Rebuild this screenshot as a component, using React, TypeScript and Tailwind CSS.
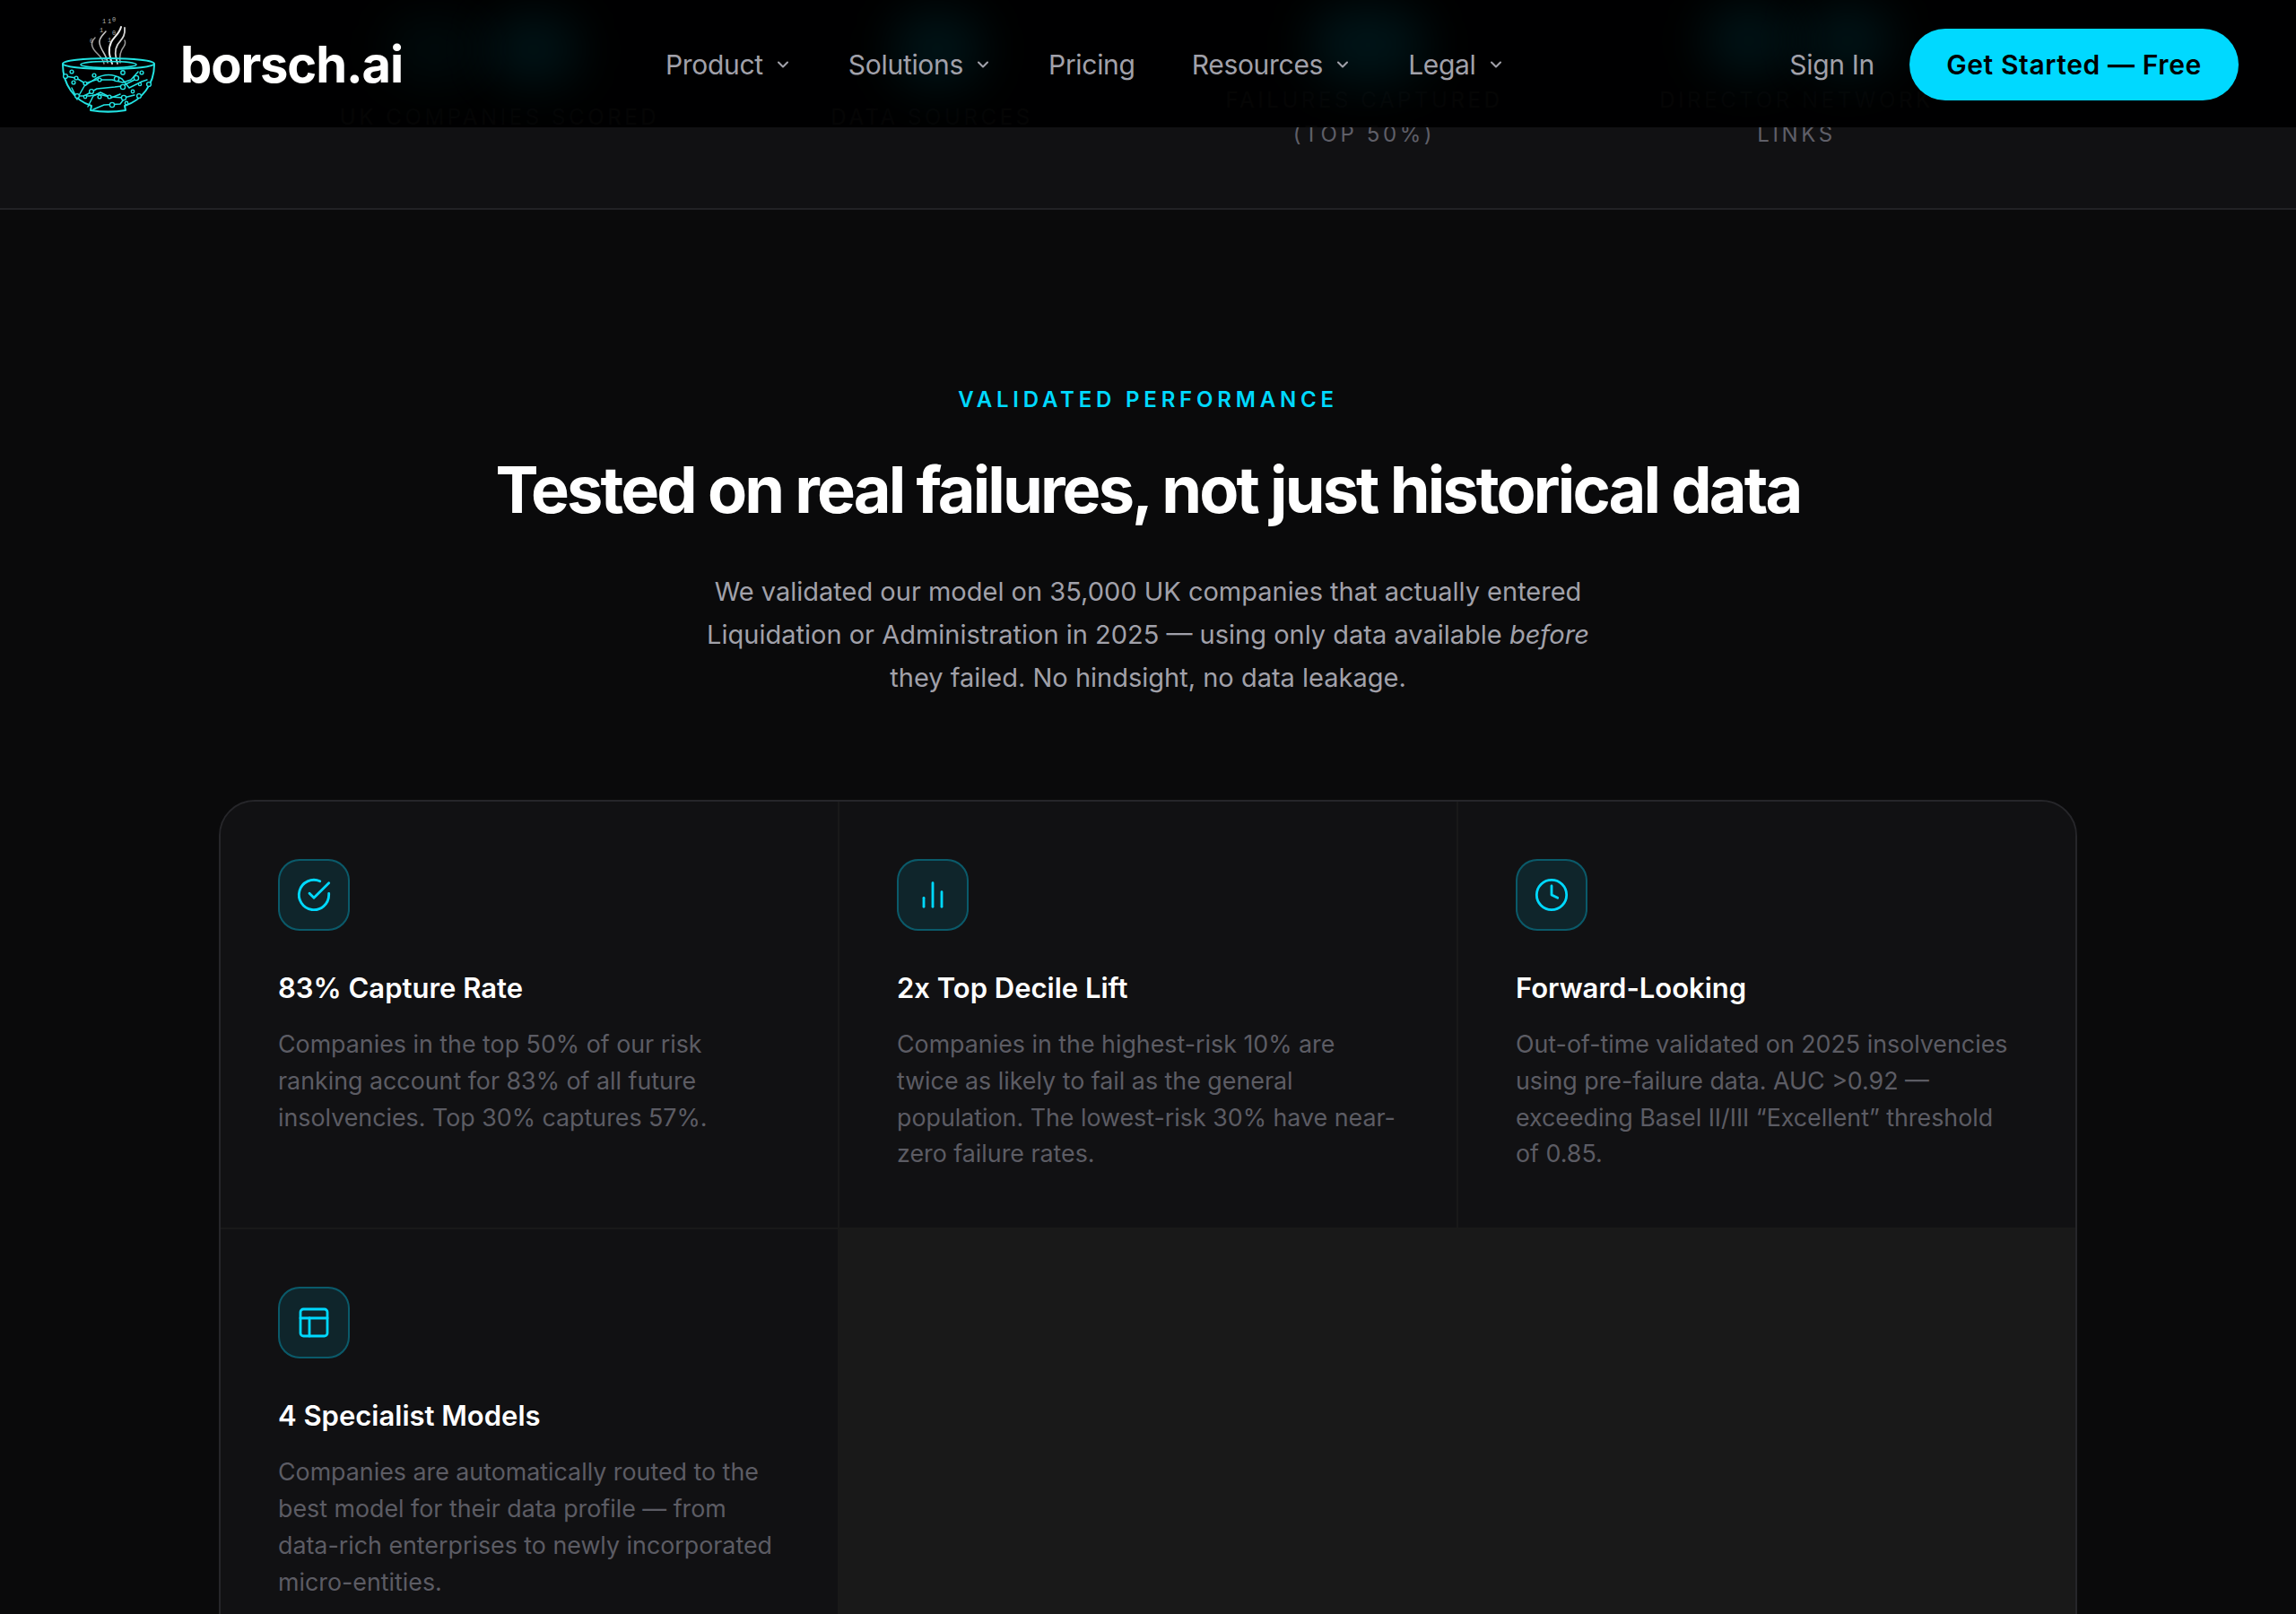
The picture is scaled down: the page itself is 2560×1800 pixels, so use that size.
import { ChevronDown } from "lucide-react";
import * as React from "react";

const navLinks = [
  { label: "Product", hasMenu: true },
  { label: "Solutions", hasMenu: true },
  { label: "Pricing", hasMenu: false },
  { label: "Resources", hasMenu: true },
  { label: "Legal", hasMenu: true },
];

const stats = [
  { label: ["UK COMPANIES SCORED"] },
  { label: ["DATA SOURCES"] },
  { label: ["FAILURES CAPTURED", "(TOP 50%)"] },
  { label: ["DIRECTOR NETWORK", "LINKS"] },
];

function BorschLogo() {
  return (
    <svg aria-hidden="true" className="h-[140px] w-[150px] shrink-0" fill="none" viewBox="50 0 150 140">
      <g stroke="#d4d4d4" strokeLinecap="round" strokeWidth="1.5">
        <path d="M116 69c-2-9-11-12-13-19-2-5 1-8 3-10" stroke="#9a9a9a" />
        <path d="M120 68c-1-9-8-14-9-22-1-6 4-9 7-13" stroke="#c4c4c4" />
        <path d="M125 69c-3-9-5-16-1-24 3-6 9-9 11-17" stroke="#ededed" strokeWidth="2" />
        <path d="M131 69c-2-8-4-14 0-21 4-6 9-9 8-19" stroke="#d4d4d4" strokeWidth="1.8" />
        <path d="M134 68c-1-7 0-13 4-18 2-3 2-5 1-7" stroke="#9a9a9a" />
      </g>
      <g fill="#b0b0b0" fontFamily="'Liberation Mono', monospace" fontSize="7">
        <text x="114" y="24">1</text>
        <text x="120" y="24">1</text>
        <text x="125" y="22">0</text>
        <text x="111" y="34">1</text>
        <text x="125" y="37">0</text>
        <text x="120" y="45">1</text>
        <text x="100" y="46">0</text>
        <text x="116" y="67">0</text>
      </g>
      <g stroke="#22e3e3" strokeLinecap="round" strokeLinejoin="round">
        <ellipse cx="121" cy="69" rx="51" ry="6" strokeWidth="2" />
        <ellipse cx="121" cy="70" rx="31" ry="3.5" strokeWidth="1.6" />
        <path d="M70 70c0 22 13 40 32 46l-1 5c12 2 27 2 39 0l-1-5c19-6 33-24 33-46" strokeWidth="2" />
        <g strokeWidth="1.5">
          <path d="M73 83l12 2 10 6 12-4 18 0 12 3 9-3 8-9" />
          <path d="M86 108l8-14 12-8c10-6 20-6 30 0l8 10 14-7 6-2" />
          <path d="M94 105l14-8 20-2 8-1 14-7" />
          <path d="M88 105h12l10-2 12 3 16 1 12-3" />
          <path d="M98 117l6-12 8-4 12 6 10-4" />
          <path d="M104 120l12-5 18-1 6-8" />
          <path d="M80 96l4 8 2 5" />
        </g>
        <g fill="#000" strokeWidth="1.4">
          <circle cx="73" cy="83" r="2.4" />
          <circle cx="80" cy="78" r="1.9" />
          <circle cx="85" cy="85" r="1.9" />
          <circle cx="82" cy="90" r="1.9" />
          <circle cx="95" cy="91" r="1.9" />
          <circle cx="105" cy="82" r="1.9" />
          <circle cx="111" cy="87" r="1.9" />
          <circle cx="130" cy="86" r="2.6" />
          <circle cx="137" cy="95" r="2.6" />
          <circle cx="137" cy="79" r="2.2" />
          <circle cx="152" cy="85" r="2.6" />
          <circle cx="158" cy="79" r="1.9" />
          <circle cx="166" cy="92" r="2.4" />
          <circle cx="156" cy="92" r="1.6" />
          <circle cx="86" cy="105" r="2.4" />
          <circle cx="102" cy="100" r="2.4" />
          <circle cx="111" cy="106" r="1.9" />
          <circle cx="122" cy="106" r="1.9" />
          <circle cx="138" cy="107" r="2.6" />
          <circle cx="155" cy="105" r="2.4" />
          <circle cx="148" cy="100" r="1.7" />
          <circle cx="125" cy="115" r="2.6" />
          <circle cx="141" cy="113" r="1.7" />
          <circle cx="95" cy="106" r="1.7" />
        </g>
      </g>
    </svg>
  );
}

function StrokeIcon({ children }: { children: React.ReactNode }) {
  return (
    <span className="flex size-20 items-center justify-center rounded-3xl border-2 border-[#00d9ff]/30 bg-[#00d9ff]/10">
      <svg
        aria-hidden="true"
        className="size-10 text-[#00d9ff]"
        fill="none"
        stroke="currentColor"
        strokeLinecap="round"
        strokeLinejoin="round"
        strokeWidth="1.7"
        viewBox="0 0 24 24"
      >
        {children}
      </svg>
    </span>
  );
}

const features = [
  {
    title: "83% Capture Rate",
    text: "Companies in the top 50% of our risk ranking account for 83% of all future insolvencies. Top 30% captures 57%.",
    icon: (
      <>
        <path d="M22 11.08V12a10 10 0 1 1-5.93-9.14" />
        <path d="M22 4 12 14.01l-3-3" />
      </>
    ),
  },
  {
    title: "2x Top Decile Lift",
    text: "Companies in the highest-risk 10% are twice as likely to fail as the general population. The lowest-risk 30% have near-zero failure rates.",
    icon: (
      <>
        <path d="M18 20V10" />
        <path d="M12 20V4" />
        <path d="M6 20v-6" />
      </>
    ),
  },
  {
    title: "Forward-Looking",
    text: "Out-of-time validated on 2025 insolvencies using pre-failure data. AUC >0.92 — exceeding Basel II/III “Excellent” threshold of 0.85.",
    icon: (
      <>
        <circle cx="12" cy="12" r="10" />
        <path d="M12 6v6l4 2" />
      </>
    ),
  },
  {
    title: "4 Specialist Models",
    text: "Companies are automatically routed to the best model for their data profile — from data-rich enterprises to newly incorporated micro-entities.",
    icon: (
      <>
        <rect height="18" rx="2" width="18" x="3" y="3" />
        <path d="M3 9h18" />
        <path d="M9 21V9" />
      </>
    ),
  },
];

function Navbar() {
  return (
    <header className="absolute inset-x-0 top-0 z-10 flex h-[142px] items-center overflow-hidden bg-black/95 pt-[2px] pr-[64px] pl-[50px]">
      {/* glow of the stat numbers, scrolled away under the nav */}
      <div className="absolute top-[20px] left-[430px] -z-10 h-[70px] w-[110px] rounded-full bg-[#00d9ff]/5 blur-[28px]" />
      <div className="absolute top-[20px] left-[545px] -z-10 h-[70px] w-[100px] rounded-full bg-[#00d9ff]/10 blur-[28px]" />
      <div className="absolute top-[15px] left-[995px] -z-10 h-[80px] w-[100px] rounded-full bg-[#00d9ff]/10 blur-[28px]" />
      <div className="absolute top-[10px] left-[1460px] -z-10 h-[80px] w-[130px] rounded-full bg-[#00d9ff]/10 blur-[28px]" />
      <div className="absolute top-[10px] left-[1900px] -z-10 h-[70px] w-[100px] rounded-full bg-[#00d9ff]/10 blur-[28px]" />
      <div className="absolute top-[10px] left-[2010px] -z-10 h-[70px] w-[100px] rounded-full bg-[#00d9ff]/10 blur-[28px]" />
      <a className="flex items-center gap-[1px]" href="#">
        <BorschLogo />
        <span className="text-[56px] leading-none font-bold tracking-[-0.02em] text-white">borsch.ai</span>
      </a>
      <nav className="ml-[293px] flex items-center gap-[63px]">
        {navLinks.map((link) => (
          <a className="flex items-center gap-3 text-[30px] tracking-[-0.01em] text-[#a1a1aa]" href="#" key={link.label}>
            {link.label}
            {link.hasMenu && <ChevronDown aria-hidden="true" className="size-5" strokeWidth={2.5} />}
          </a>
        ))}
      </nav>
      <div className="ml-auto flex items-center gap-[39px]">
        <a className="text-[30px] tracking-[-0.01em] text-[#a1a1aa]" href="#">
          Sign In
        </a>
        <a
          className="flex h-20 w-[367px] items-center justify-center rounded-full bg-[#00d9ff] text-[30px] font-semibold tracking-[0.02em] text-black"
          href="#"
        >
          Get Started — Free
        </a>
      </div>
    </header>
  );
}

function StatsBand() {
  return (
    <section className="h-[234px] overflow-hidden border-b-2 border-[#222225] bg-[#111113]">
      <div className="mx-auto grid h-[262px] w-[1928px] grid-cols-4">
        {stats.map((stat) => (
          <div className="flex flex-col items-center justify-center text-[24px] leading-[38px] tracking-[0.15em] text-[#5f5f68]" key={stat.label[0]}>
            {stat.label.map((line) => (
              <span key={line}>{line}</span>
            ))}
          </div>
        ))}
      </div>
    </section>
  );
}

function FeatureGrid() {
  return (
    <div className="mx-auto mt-[112px] grid w-[2072px] grid-cols-3 gap-[2px] overflow-hidden rounded-[40px] border-2 border-[#26262a] bg-[#191919]">
      {features.map((feature) => (
        <article className="bg-[#111113] px-16 pt-16 pb-[62px]" key={feature.title}>
          <StrokeIcon>{feature.icon}</StrokeIcon>
          <h3 className="mt-[42px] text-[31px] leading-[44px] font-semibold text-white">{feature.title}</h3>
          <p className="mt-[20px] text-[26.8px] leading-[40.8px] text-[#5c5c64]">{feature.text}</p>
        </article>
      ))}
    </div>
  );
}

export default function App() {
  return (
    <div className="relative h-[1800px] overflow-hidden bg-[#0a0a0b] font-['Inter',sans-serif]">
      <Navbar />
      <StatsBand />
      <main className="pt-[198px]">
        <p className="text-center text-[24px] leading-[28px] font-semibold tracking-[0.2em] text-[#00d9ff]">
          VALIDATED PERFORMANCE
        </p>
        <h2 className="mt-[43px] text-center text-[72px] leading-[86px] font-bold tracking-[-0.04em] text-white">
          Tested on real failures, not just historical data
        </h2>
        <p className="mx-auto mt-[47px] w-[1000px] text-center text-[29px] leading-[48px] text-[#a1a1aa]">
          We validated our model on 35,000 UK companies that actually entered Liquidation or Administration in 2025 — using only data available <em>before</em> they failed. No hindsight, no data leakage.
        </p>
        <FeatureGrid />
      </main>
    </div>
  );
}
